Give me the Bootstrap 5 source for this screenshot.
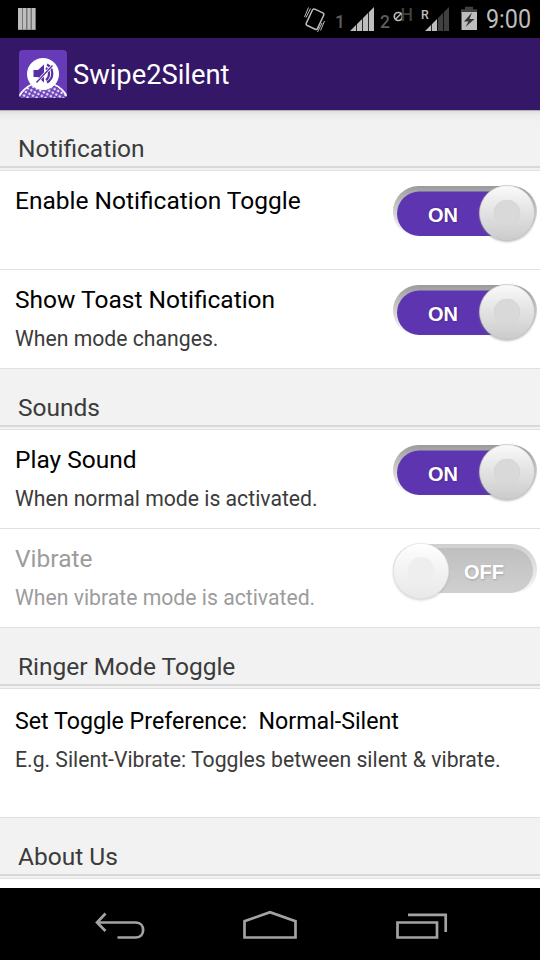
<!DOCTYPE html>
<html lang="en">
<head>
<meta charset="utf-8">
<meta name="viewport" content="width=device-width, initial-scale=1">
<title>Swipe2Silent</title>
<link href="https://cdn.jsdelivr.net/npm/bootstrap@5.3.0/dist/css/bootstrap.min.css" rel="stylesheet">
<style>
body{font-family:Roboto,"Noto Sans",sans-serif;width:540px;height:960px;background:#fff;color:#000}
svg{display:block;flex:none}
svg text{font-family:Roboto,sans-serif}
.status-strip{height:38px;background:#000}
.app-bar{height:72px;background:#351768;padding-left:19px}
.app-name{font-size:27.3px;line-height:32px;margin-left:6px;padding-top:2px;color:#fff}
.settings{height:778px}
.group-head{height:61px;background:#f2f2f2;border-bottom:1px solid #e0e0e0;padding-bottom:2px}
.group-head h2{height:58px;margin:0;padding:25px 0 0 18px;border-bottom:2px solid #d8d8d8;font-size:24.5px;line-height:28px;font-weight:400;color:#3b3b3b}
.first-head{background:linear-gradient(#b0b0b0 0,#b0b0b0 1px,#dedede 1px,#ececec 5px,#f2f2f2 12px)}
.pref{height:99px;border-bottom:1px solid #e0e0e0;padding:16px 0 0 15px}
.pref-tall{height:129px;padding-top:18px}
.pref-title{font-size:24.5px;line-height:28px;white-space:pre}
.pref-tall .pref-title{font-size:23.2px}
.pref-note{font-size:21.2px;line-height:24px;margin-top:13px;color:#3b3b3b;white-space:nowrap}
.off-row .pref-title,.off-row .pref-note{color:#9c9c9c}
.toggle{margin-top:-6px}
svg text.toggle-word{font:bold 20px "Liberation Sans",sans-serif;fill:#fff}
svg text.toggle-shade{fill:#3f2380}
svg text.toggle-shade-off{fill:#a0a0a0}
.nav-strip{height:72px;background:#000}
</style>
<script src="https://cdn.jsdelivr.net/npm/bootstrap@5.3.0/dist/js/bootstrap.bundle.min.js"></script>
</head>
<body class="d-flex flex-column overflow-hidden">
<svg width="0" height="0" class="position-absolute">
<defs>
<linearGradient id="rim" x2="0" y2="1"><stop offset="0" stop-color="#9b9b9b"/><stop offset=".22" stop-color="#b3b3b3"/><stop offset=".7" stop-color="#e2e2e2"/><stop offset="1" stop-color="#fff"/></linearGradient>
<linearGradient id="rimOff" x2="0" y2="1"><stop offset="0" stop-color="#cfcfcf"/><stop offset=".7" stop-color="#ebebeb"/><stop offset="1" stop-color="#fff"/></linearGradient>
<linearGradient id="offFill" x2="0" y2="1"><stop offset="0" stop-color="#bfbfbf"/><stop offset="1" stop-color="#d0d0d0"/></linearGradient>
<linearGradient id="knob" x2="0" y2="1"><stop offset="0" stop-color="#fafafa"/><stop offset=".5" stop-color="#e2e2e2"/><stop offset="1" stop-color="#cbcbcb"/></linearGradient>
<linearGradient id="knobOff" x2="0" y2="1"><stop offset="0" stop-color="#fff"/><stop offset=".5" stop-color="#f2f2f2"/><stop offset="1" stop-color="#e8e8e8"/></linearGradient>
<filter id="soft" x="-20%" y="-20%" width="140%" height="140%"><feGaussianBlur stdDeviation="1"/></filter>
<pattern id="dots" width="4" height="4" patternUnits="userSpaceOnUse" patternTransform="rotate(28)"><rect width="4" height="4" fill="#673ab7"/><rect x=".6" y=".6" width="2.3" height="2.3" fill="#f1ebfa"/></pattern>
<symbol id="switch-on" viewBox="0 0 150 64">
<rect x="3" y="5" width="144" height="51" rx="25.5" fill="url(#rim)"/>
<rect x="7" y="10.500" width="136" height="44.500" rx="22.250" fill="#5e35b1"/>
<circle cx="117" cy="33" r="28" fill="#777" opacity=".5" filter="url(#soft)"/>
<circle cx="117" cy="32" r="27.500" fill="url(#knob)" stroke="#c4c4c4" stroke-width=".7"/>
<circle cx="117" cy="32" r="13" fill="#d9d9d9" stroke="#d2d2d2" stroke-width=".6"/>
<text x="38.500" y="41" class="toggle-word toggle-shade" filter="url(#soft)">ON</text><text x="38" y="40.500" class="toggle-word">ON</text>
</symbol>
<symbol id="switch-off" viewBox="0 0 150 64">
<rect x="3" y="5" width="144" height="51" rx="25.500" fill="url(#rimOff)"/>
<rect x="7" y="9" width="136" height="45" rx="22.500" fill="url(#offFill)"/>
<circle cx="31" cy="33.500" r="28" fill="#999" opacity=".4" filter="url(#soft)"/>
<circle cx="31" cy="32" r="27.700" fill="url(#knobOff)" stroke="#dedede" stroke-width=".6"/>
<circle cx="31" cy="31.500" r="13.500" fill="#eee"/>
<text x="74.500" y="40.500" class="toggle-word toggle-shade-off" filter="url(#soft)">OFF</text><text x="74" y="40" class="toggle-word">OFF</text>
</symbol>
</defs>
</svg>

<div class="status-strip d-flex">
<svg width="540" height="38" viewBox="0 0 540 38">
<path d="M18 8h18v22H18z" fill="#777"/><path d="M18 8h4v21.500h-4zM23 8h3v21.500h-3zM27.500 8h3v21.500h-3zM32 8h3v21.500h-3z" fill="#bdbdbd"/>
<g fill="none" stroke="#bdbdbd"><rect x="-6.200" y="-9" width="12.400" height="18" rx="1.800" stroke-width="1.500" transform="translate(315 19.200) rotate(25)"/>
<path d="M308.500 7.500l-4 9.500M310.500 8.500l-4.500 9M320.500 30.500l4-9.500M317.500 32l4.500-9" stroke-width="1"/></g>
<g fill="#bdbdbd"><path d="M350 31l6-6v6zM356.800 24.200l5.200-5.200v12h-5.200zM362.800 18.200l5.200-5.200v18h-5.200zM368.800 12.200l5.200-5.200v24h-5.200z"/>
<path d="M425 31l6-6v6zM431.800 24.200l5.200-5.200v12h-5.200z"/></g>
<path d="M437.800 18.200l5.200-5.200v18h-5.200zM443.800 12.200l5.200-5.200v24h-5.200z" fill="#404040"/>
<circle cx="398.300" cy="16.500" r="4" fill="none" stroke="#bdbdbd" stroke-width="1.700"/><path d="M395.500 19.300l5.500-5.500" stroke="#bdbdbd" stroke-width="1.500"/>
<path d="M465 6.700h8v2.500h4V13h-16V9.200h4z" fill="#404040"/><path d="M461.500 12h15.500v18h-15.500z" fill="#bdbdbd"/><path d="M472 12.500L464 21.500h4.500L465.500 27l9-8h-5z" fill="#333"/>
<text x="335" y="27.700" font-size="17.500" fill="#5d5d5d" font-weight="500">1</text>
<text x="380" y="27.700" font-size="17.500" fill="#5d5d5d" font-weight="500">2</text>
<text x="400.500" y="20.700" font-size="19" fill="#404040" font-weight="500" textLength="12.500" lengthAdjust="spacingAndGlyphs">H</text>
<text x="421" y="18.700" font-size="13.500" fill="#bdbdbd" font-weight="500" textLength="7.800" lengthAdjust="spacingAndGlyphs">R</text>
<text x="486" y="28" font-size="25" fill="#bdbdbd" textLength="45" lengthAdjust="spacingAndGlyphs">9:00</text>
</svg>
</div>

<header class="app-bar d-flex align-items-center">
<svg width="48" height="48" viewBox="0 0 48 48">
<clipPath id="tile"><rect width="48" height="48" rx="4"/></clipPath>
<g clip-path="url(#tile)"><rect width="48" height="48" fill="#673ab7"/>
<circle cx="24" cy="59" r="27" fill="url(#dots)" stroke="#fff" stroke-width="1.600"/>
<circle cx="24" cy="24" r="16" fill="#fff"/>
<path d="M14.500 20h4.500l6-5.500v18L19 27h-4.500z" fill="#5730a5"/><path d="M27 18c4 3 4 9 0 12M28 14.500c7 4 7 14 0 18" fill="none" stroke="#5730a5" stroke-width="2.200"/>
<path d="M17 33L33 16" stroke="#fff" stroke-width="2.600"/><path d="M17.500 32.500L33.500 15.500" stroke="#5730a5" stroke-width="1.300"/></g>
</svg>
<h1 class="app-name mb-0 fw-normal">Swipe2Silent</h1>
</header>

<main class="settings overflow-hidden">
<div class="group-head first-head"><h2>Notification</h2></div>
<div class="pref d-flex justify-content-between"><div><div class="pref-title">Enable Notification Toggle</div></div><svg class="toggle" width="150" height="64"><use href="#switch-on"/></svg></div>
<div class="pref d-flex justify-content-between"><div><div class="pref-title">Show Toast Notification</div><div class="pref-note">When mode changes.</div></div><svg class="toggle" width="150" height="64"><use href="#switch-on"/></svg></div>
<div class="group-head"><h2>Sounds</h2></div>
<div class="pref d-flex justify-content-between"><div><div class="pref-title">Play Sound</div><div class="pref-note">When normal mode is activated.</div></div><svg class="toggle" width="150" height="64"><use href="#switch-on"/></svg></div>
<div class="pref off-row d-flex justify-content-between"><div><div class="pref-title">Vibrate</div><div class="pref-note">When vibrate mode is activated.</div></div><svg class="toggle" width="150" height="64"><use href="#switch-off"/></svg></div>
<div class="group-head"><h2>Ringer Mode Toggle</h2></div>
<div class="pref pref-tall"><div class="pref-title">Set Toggle Preference:  Normal-Silent</div><div class="pref-note">E.g. Silent-Vibrate: Toggles between silent &amp; vibrate.</div></div>
<div class="group-head"><h2>About Us</h2></div>
</main>

<nav class="nav-strip d-flex">
<svg width="540" height="72" viewBox="0 0 540 72" fill="none" stroke="#a3a3a3" stroke-width="2.700">
<path d="M105.500 25.500L97 34.500l8.500 8.500M97 34.500h39c9.500 0 9.500 15 0 15h-18.500"/>
<path d="M244.500 49.500V33.200L270 24.200l25.500 9v16.300z"/>
<path d="M397.500 34.500h39.500v15h-39.500zM408 26.800h37.700V44"/>
</svg>
</nav>
</body>
</html>
